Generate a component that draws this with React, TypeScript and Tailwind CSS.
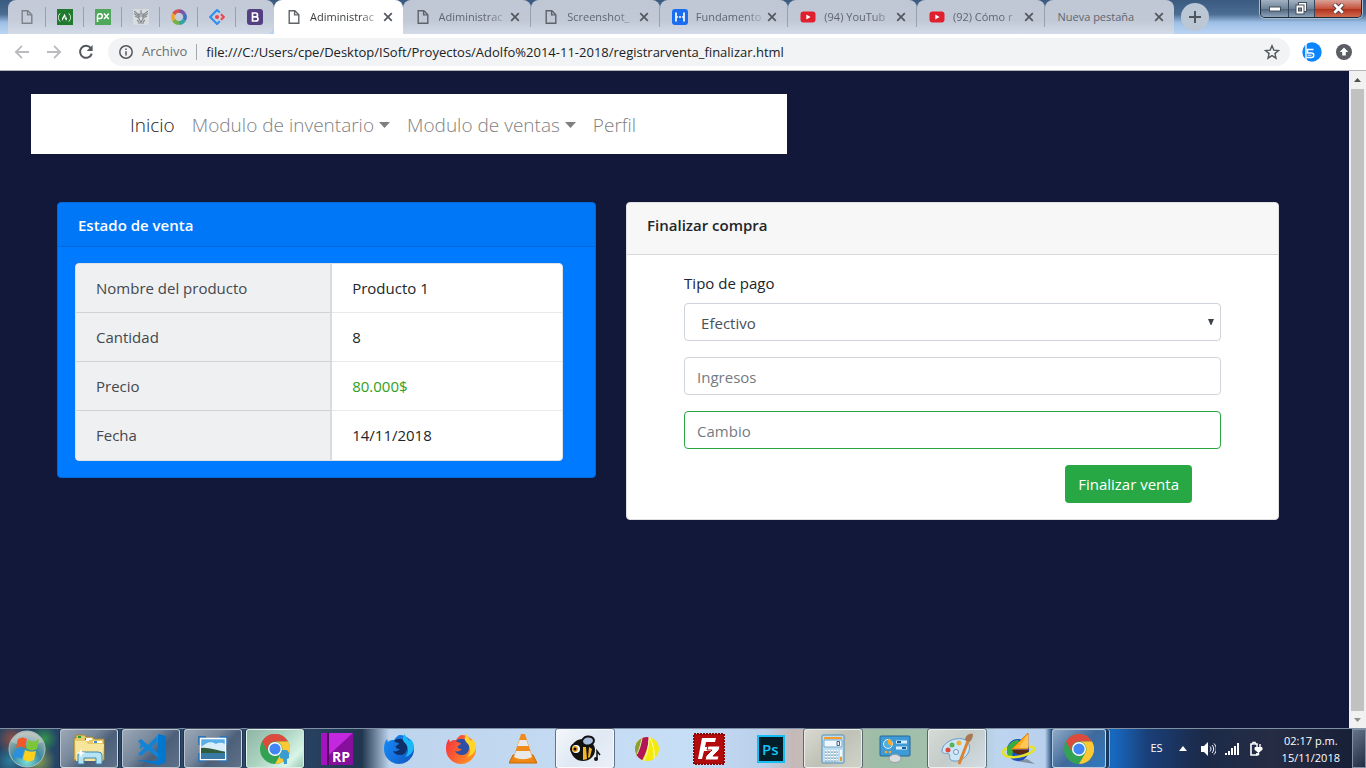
import type { ReactNode } from "react";
import { FaFreeCodeCamp } from "react-icons/fa";

const sans = "font-['Open_Sans','Noto_Sans',sans-serif]";

function PageIcon({ className = "" }: { className?: string }) {
  return (
    <svg className={className} width="16" height="16" viewBox="0 0 16 16" fill="none" stroke="#5f6368" strokeWidth="1.4">
      <path d="M3.2 1.7h5.6l4 4v8.6H3.2z" />
      <path d="M8.6 1.8v4.1h4.1" />
    </svg>
  );
}

function YoutubeIcon() {
  return (
    <svg width="16" height="16" viewBox="0 0 16 16">
      <rect x="0.5" y="2.5" width="15" height="11" rx="3" fill="#e0202c" />
      <path d="M6.3 5.4 10.6 8l-4.3 2.6z" fill="#fff" />
    </svg>
  );
}

function HIcon() {
  return (
    <svg width="16" height="16" viewBox="0 0 16 16">
      <rect width="16" height="16" rx="3" fill="#1a6df0" />
      <path d="M4 3.6v8.8M12 3.6v8.8" stroke="#fff" strokeWidth="1.7" />
      <path d="M4.5 8h1.6M9.9 8h1.6" stroke="#fff" strokeWidth="1.4" />
      <circle cx="8" cy="8" r="1" fill="#fff" />
    </svg>
  );
}

function CloseGlyph() {
  return (
    <svg width="10" height="10" viewBox="0 0 10 10" stroke="#54585e" strokeWidth="1.7">
      <path d="M1.2 1.2l7.6 7.6M8.8 1.2 1.2 8.8" />
    </svg>
  );
}

const pinned: { label: string; icon: ReactNode }[] = [
  { label: "Documento", icon: <PageIcon className="opacity-70" /> },
  {
    label: "freeCodeCamp",
    icon: (
      <span className="flex size-4 items-center justify-center bg-[#1f7a2d] text-white">
        <FaFreeCodeCamp size={13} />
      </span>
    ),
  },
  {
    label: "Pixabay",
    icon: (
      <svg width="16" height="16" viewBox="0 0 16 16">
        <rect width="16" height="16" fill="#4fa75b" />
        <g fill="none" stroke="#fff" strokeWidth="1.5">
          <path d="M2.5 13V7a2.4 2.4 0 1 1 2.4 2.6H2.8" />
          <path d="M9 4.6l4.8 5.4M13.8 4.6 9 10" />
        </g>
      </svg>
    ),
  },
  {
    label: "Escudo",
    icon: (
      <svg width="16" height="16" viewBox="0 0 16 16">
        <rect width="16" height="16" fill="#d9dcdf" />
        <g fill="none" stroke="#858a90" strokeWidth="1.1">
          <path d="M1 2l5 4M1 4.5l5 3M15 2l-5 4M15 4.5l-5 3M2 7l4 2M14 7l-4 2" />
          <path d="M6 5h4v5l-2 3-2-3zM8 1v4M5 14h6M4 11l2 2M12 11l-2 2M6.5 7h3" />
        </g>
      </svg>
    ),
  },
  {
    label: "Color",
    icon: (
      <svg width="16" height="16" viewBox="0 0 16 16" fill="none" strokeWidth="3.6">
        <path d="M8 2a6 6 0 0 1 5.2 3" stroke="#7a55a3" />
        <path d="M13.2 5a6 6 0 0 1 0 6" stroke="#3f6fc0" />
        <path d="M13.2 11A6 6 0 0 1 8 14" stroke="#31a5a4" />
        <path d="M8 14a6 6 0 0 1-5.2-3" stroke="#76b043" />
        <path d="M2.8 11a6 6 0 0 1 0-6" stroke="#eda52e" />
        <path d="M2.8 5A6 6 0 0 1 8 2" stroke="#d8504d" />
      </svg>
    ),
  },
  {
    label: "Ant Design",
    icon: (
      <svg width="16" height="16" viewBox="0 0 16 16" fill="none" strokeWidth="2">
        <path d="M10.8 3.6 8 1 1.2 8 8 15l2.8-2.7" stroke="#2a8ff0" />
        <path d="M12 5.2 14.8 8 12 10.8" stroke="#f0434e" />
        <circle cx="8" cy="8" r="2" fill="#f0434e" />
      </svg>
    ),
  },
  {
    label: "Bootstrap",
    icon: (
      <svg width="16" height="16" viewBox="0 0 16 16">
        <rect width="16" height="16" rx="3" fill="#553f83" />
        <path d="M5.5 4h3.1a1.9 1.9 0 0 1 0 3.8H5.5zM5.5 7.8h3.4a2.1 2.1 0 0 1 0 4.2H5.5z" fill="none" stroke="#fff" strokeWidth="1.7" />
      </svg>
    ),
  },
];

const tabs: { title: string; icon: ReactNode; active?: boolean }[] = [
  { title: "Adiministrac", icon: <PageIcon />, active: true },
  { title: "Adiministrac", icon: <PageIcon /> },
  { title: "Screenshot_", icon: <PageIcon /> },
  { title: "Fundamento", icon: <HIcon /> },
  { title: "(94) YouTub", icon: <YoutubeIcon /> },
  { title: "(92) Cómo r", icon: <YoutubeIcon /> },
  { title: "Nueva pestaña", icon: null },
];

function TabStrip() {
  return (
    <div className="flex h-[34px] bg-[linear-gradient(180deg,#3a5a80_0%,#4b6d92_42%,#9dbfe6_66%,#bcd5f3_100%)] pl-2">
      <div className="flex shrink-0 rounded-t-lg rounded-br-lg bg-[linear-gradient(180deg,#c3cad6,#c5ccda_60%,#d3dbe8)]">
        {pinned.map((p, i) => (
          <button key={p.label} aria-label={p.label} className="flex w-[38px] items-center justify-center">
            <span className="flex flex-1 justify-center">{p.icon}</span>
            {i < pinned.length - 1 && <span className="h-5 w-px bg-[#98a0ac]" />}
          </button>
        ))}
      </div>
      <div className="flex min-w-0 flex-[0_1_900px]">
        {tabs.map((t, i) => (
          <div
            key={i}
            className={`flex min-w-0 flex-1 items-center rounded-t-lg pl-3 ${
              t.active ? "bg-white" : "bg-[linear-gradient(180deg,#bfc7d4,#c1c9d6_60%,#d3dbe8)]"
            }`}
          >
            {t.icon && <span className="mr-2 shrink-0">{t.icon}</span>}
            <button
              className={`min-w-0 flex-1 text-left text-[11px] whitespace-nowrap ${
                t.icon ? "[mask-image:linear-gradient(90deg,#000_72%,#0003)]" : ""
              } ${t.active ? "text-[#3c4043]" : "text-[#5f6670]"}`}
            >
              {t.title}
            </button>
            <button aria-label="Cerrar pestaña" className="mr-[10px] ml-1 shrink-0">
              <CloseGlyph />
            </button>
            {i > 0 && i < tabs.length - 1 && <span className="h-5 w-px bg-[#98a0ac]" />}
          </div>
        ))}
      </div>
      <button aria-label="Nueva pestaña" className="mt-[3px] ml-[7px] flex size-7 shrink-0 items-center justify-center rounded-full bg-[#bcc7d5]">
        <svg width="14" height="14" viewBox="0 0 14 14" stroke="#50565e" strokeWidth="2">
          <path d="M7 1v12M1 7h12" />
        </svg>
      </button>
      <div className="mr-1 ml-auto flex h-[18px] shrink-0 overflow-hidden rounded-b-[5px] border border-t-0 border-[#1f2a38] shadow-[0_0_0_1px_#a9bdd2]">
        <button aria-label="Minimizar" className="flex w-7 items-center justify-center border-r border-[#34465a] bg-[linear-gradient(180deg,#a3b2c3,#6f8399_50%,#50657c_52%,#8ba3bb)]">
          <svg width="12" height="6" viewBox="0 0 12 6">
            <rect x="0.5" y="1" width="11" height="4" fill="#fff" stroke="#454f5c" />
          </svg>
        </button>
        <button aria-label="Restaurar" className="flex w-[26px] items-center justify-center border-r border-[#34465a] bg-[linear-gradient(180deg,#a3b2c3,#6f8399_50%,#50657c_52%,#8ba3bb)]">
          <svg width="13" height="13" viewBox="0 0 13 13" stroke="#454f5c" fill="#fff">
            <rect x="3.5" y="0.5" width="8" height="9" />
            <rect x="1" y="3" width="8" height="9" />
            <rect x="3.5" y="6" width="3" height="3" fill="#78899c" />
          </svg>
        </button>
        <button aria-label="Cerrar" className="flex w-[46px] items-center justify-center bg-[linear-gradient(180deg,#dba197,#c5543f_50%,#b1301a_52%,#d06a50)]">
          <svg width="13" height="11" viewBox="0 0 13 11">
            <path d="M2 1l9 9M11 1 2 10" stroke="#4d3c42" strokeWidth="4.6" />
            <path d="M2.3 1.3l8.4 8.4M10.7 1.3 2.3 9.7" stroke="#fff" strokeWidth="2.8" />
          </svg>
        </button>
      </div>
    </div>
  );
}

function Toolbar() {
  return (
    <div className="flex h-[37px] items-center border-b border-[#b5b5b8] bg-white px-[14px]">
      <div className="flex shrink-0 gap-4">
        <button aria-label="Atrás">
          <svg width="16" height="16" viewBox="0 0 16 16" fill="none" stroke="#b9bbbe" strokeWidth="1.8">
            <path d="M15 8H2M8 1.8 1.8 8 8 14.2" />
          </svg>
        </button>
        <button aria-label="Adelante">
          <svg width="16" height="16" viewBox="0 0 16 16" fill="none" stroke="#b9bbbe" strokeWidth="1.8">
            <path d="M1 8h13M8 1.8 14.2 8 8 14.2" />
          </svg>
        </button>
        <button aria-label="Recargar">
          <svg width="16" height="16" viewBox="0 0 16 16" fill="none" stroke="#54585d" strokeWidth="2">
            <path d="M12.8 4.1A6 6 0 1 0 13.8 9.6" />
            <path d="M14.6 1v6H8.6z" fill="#54585d" stroke="none" />
          </svg>
        </button>
      </div>
      <div className="ml-[14px] flex h-7 min-w-0 flex-1 items-center rounded-full bg-[#f1f3f4] pr-[10px] pl-[11px]">
        <svg width="14" height="14" viewBox="0 0 14 14" fill="none" stroke="#54585d" strokeWidth="1.5">
          <circle cx="7" cy="7" r="6.2" />
          <path d="M7 6.2v4.2M7 3.4v1.6" />
        </svg>
        <span className="ml-[9px] text-[13px] text-[#6a6e73]">Archivo</span>
        <span className="mx-[9px] h-4 w-px shrink-0 bg-[#a5a8ac]" />
        <input
          aria-label="Dirección"
          className="min-w-0 flex-1 bg-transparent pt-0.5 text-[13px] text-[#202124] outline-none"
          defaultValue="file:///C:/Users/cpe/Desktop/ISoft/Proyectos/Adolfo%2014-11-2018/registrarventa_finalizar.html"
        />
        <button aria-label="Marcador">
          <svg width="16" height="16" viewBox="0 0 16 16" fill="none" stroke="#54585d" strokeWidth="1.4">
            <path d="M8 1.8l1.8 4.3 4.7.4-3.6 3.1 1.1 4.6L8 11.7l-4 2.5 1.1-4.6L1.5 6.5l4.7-.4z" />
          </svg>
        </button>
      </div>
      <button aria-label="Extensión" className="ml-3">
        <svg width="20" height="20" viewBox="0 0 20 20">
          <circle cx="10" cy="10" r="9.7" fill="#0a84ff" />
          <path d="M4 0v20" stroke="#fff" strokeWidth="1.4" />
          <path d="M11.500 7.500H5.500V11H9.500a2.200 2.200 0 0 1 0 4.500H4.500" fill="none" stroke="#fff" strokeWidth="1.5" />
          <path d="M5.500 13.200H9.500" stroke="#fff" strokeWidth="1" />
        </svg>
      </button>
      <button aria-label="Actualizar Chrome" className="ml-[14px]">
        <svg width="16" height="16" viewBox="0 0 16 16">
          <circle cx="8" cy="8" r="8" fill="#5a5d62" />
          <path d="M8 3.5l4.3 4.6H9.8v3.5H6.2V8.1H3.7z" fill="#fff" />
        </svg>
      </button>
    </div>
  );
}

function Caret() {
  return (
    <svg className="mb-1 ml-[5px] inline" width="11" height="6" viewBox="0 0 11 6">
      <path d="M0 0h11L5.5 6z" fill="#7f7f7f" />
    </svg>
  );
}

const rows = [
  { name: "Nombre del producto", value: "Producto 1" },
  { name: "Cantidad", value: "8" },
  { name: "Precio", value: "80.000$", green: true },
  { name: "Fecha", value: "14/11/2018" },
];

function SaleCard() {
  return (
    <section className="rounded border border-[#0069d9] bg-[#007bff]">
      <h2 className="rounded-t-[3px] border-b border-[#0069d9] bg-[#0077f7] px-5 pt-[11px] pb-[9px] text-[15px] leading-[23px] font-semibold text-white">
        Estado de venta
      </h2>
      <div className="py-4 pr-8 pl-[17px]">
        <table className="w-full table-fixed border-separate border-spacing-0 overflow-hidden rounded border border-[#dfe1e3] bg-white text-[15px]">
          <tbody>
            {rows.map((r, i) => (
              <tr key={r.name}>
                <th
                  scope="row"
                  className={`h-[49px] w-[52.7%] border-r-2 border-[#d9dbdd] bg-[#eff0f2] pl-5 text-left font-normal text-[#43484d] ${
                    i < 3 ? "border-b border-b-[#d0d2d4]" : ""
                  }`}
                >
                  {r.name}
                </th>
                <td
                  className={`h-[49px] border-[#e9e9e9] pl-5 ${i < 3 ? "border-b" : ""} ${
                    r.green ? "text-[#31a020]" : "text-[#212529]"
                  }`}
                >
                  {r.value}
                </td>
              </tr>
            ))}
          </tbody>
        </table>
      </div>
    </section>
  );
}

const field =
  "block h-[38px] w-full rounded border bg-white px-3 pt-0.5 text-[15px] text-[#495057] placeholder:text-[#747b82] outline-none";

function CheckoutCard() {
  return (
    <section className="rounded border border-[#dfdfe1] bg-white">
      <h2 className="rounded-t-[3px] border-b border-[#d9d9db] bg-[#f7f7f7] px-5 pt-[11px] pb-[17px] text-[15px] leading-[23px] font-semibold text-[#212529]">
        Finalizar compra
      </h2>
      <form className="flex flex-col gap-4 px-[57px] py-4" onSubmit={(e) => e.preventDefault()}>
        <div>
          <label htmlFor="pago" className="mb-2 block text-[15px] leading-6 text-[#212529]">
            Tipo de pago
          </label>
          <div className="relative">
            <select id="pago" className={`${field} appearance-none border-[#ced4da] pl-4`}>
              <option>Efectivo</option>
            </select>
            <svg className="pointer-events-none absolute top-4 right-[7px]" width="6" height="6" viewBox="0 0 6 6">
              <path d="M0 0h6L3.4 6h-.8z" fill="#3c434a" />
            </svg>
          </div>
        </div>
        <input aria-label="Ingresos" placeholder="Ingresos" className={`${field} border-[#ced4da]`} />
        <input aria-label="Cambio" placeholder="Cambio" className={`${field} border-[#28a745]`} />
        <button className="mr-[29px] h-[38px] self-end rounded bg-[#28a745] px-[13px] text-[15px] text-white">
          Finalizar venta
        </button>
      </form>
    </section>
  );
}

function Chrome() {
  return (
    <svg width="30" height="30" viewBox="0 0 30 30">
      <circle cx="15" cy="15" r="15" fill="#34a255" />
      <path d="M2 7.5A15 15 0 0 1 28 7.5H15A7.5 7.5 0 0 0 8.5 18.7z" fill="#dd4b3e" />
      <path d="M28 7.5A15 15 0 0 1 15 30L21.5 18.7A7.5 7.5 0 0 0 15 7.5z" fill="#fcc934" />
      <circle cx="15" cy="15" r="7" fill="#fff" />
      <circle cx="15" cy="15" r="5.6" fill="#4285f4" />
    </svg>
  );
}

function Firefox({ id, from, to, tail, globe }: { id: string; from: string; to: string; tail: string; globe: string }) {
  return (
    <svg width="32" height="32" viewBox="0 0 32 32">
      <defs>
        <linearGradient id={id} x1="0" y1="0.3" x2="1" y2="0.8">
          <stop offset="0" stopColor={from} />
          <stop offset="1" stopColor={to} />
        </linearGradient>
      </defs>
      <path d="M1 16C1 11 2 8 4 6l1 3c2-2 4-2 6-2 2-3 4-5 6-5 6 0 14 6 14 14a15 15 0 0 1-30 0z" fill={`url(#${id})`} />
      <path d="M11 8c3-3 8-3 11 0 3 4 3 10-1 13-4 2-9 1-11-3 3 1 5 0 7-2-3 0-5-1-4-3l3-2c0-2-4-1-5-3z" fill={globe} />
      <path d="M22 1c-3 3-3 6 0 9 4 4 4 10 0 14 5-1 8-5 9-9 0-5-2-8-4-9l-1 2c-1-3-4-4-4-7z" fill={tail} />
    </svg>
  );
}

const dark = "bg-[linear-gradient(135deg,#9aa7b6_0%,#77879b_40%,#4d607a_60%,#5f7189_100%)]";

const apps: { name: string; icon: ReactNode; frame?: string }[] = [
  {
    name: "Explorador",
    frame: dark,
    icon: (
      <svg width="34" height="32" viewBox="0 0 34 32">
        <path d="M2 5h2V2h9l1 2h7l1 2h10v21H2z" fill="#e6c968" stroke="#9d8539" />
        <path d="M3 8h11l2 3h16l-1 17H4z" fill="#f7e59b" />
        <path d="M6 3h3v2H6z" fill="#2a9b34" />
        <path d="M13 5h4v2h-4z" fill="#c53b31" />
        <path d="M14 5h6v2h-3v1h-3z" fill="#fff" />
        <path d="M21 8h9v2h-9z" fill="#fff" />
        <path d="M22 8h3v2h-3z" fill="#3c8bd0" />
        <path d="M6 31V22q0-3 4-3h16q4 0 4 3v9h-6v-6H12v6z" fill="#b5e3f4" stroke="#3a87ad" />
        <path d="M9 15l1 4 4 1-4 1-1 4-1-4-4-1 4-1z" fill="#fff" />
      </svg>
    ),
  },
  {
    name: "Visual Studio Code",
    frame: dark,
    icon: (
      <svg width="32" height="32" viewBox="0 0 32 32">
        <path d="M23 1 31 3v26l-7 3L1 27l22 1z" fill="#0078cf" />
        <path d="M3 8l3-2 7 6 9-9 1 5-6 6 6 6v5l-10-8-7 6-3-2 6-6zM5 11v5l3-2z" fill="#1583d3" fillRule="evenodd" />
      </svg>
    ),
  },
  {
    name: "Visor de imágenes",
    frame: dark,
    icon: (
      <svg width="30" height="26" viewBox="0 0 30 26">
        <path d="M0 0h8v4H4v5H0zM22 0h8v9h-4V4h-4zM0 17h4v5h4v4H0zM26 17h4v9h-8v-4h4z" fill="#2e75b7" />
        <rect x="2.500" y="2.500" width="25" height="21" fill="#5aaee8" stroke="#fff" strokeWidth="1.5" />
        <path d="M3 11c6-5 10-6 15-3 4-2 6-1 9 0v7H3z" fill="#d8eef8" />
        <path d="M3 12c7-1 15 2 24 4v2H3z" fill="#315c3b" />
        <path d="M3 17h24v6H3z" fill="#377ba5" />
      </svg>
    ),
  },
  {
    name: "Google Chrome",
    frame: "bg-[linear-gradient(135deg,#8fb5a5,#acd3c0_45%,#d9f5e8_80%,#9cc8b4)]",
    icon: (
      <span className="relative">
        <Chrome />
        <svg className="absolute right-0 bottom-0" width="12" height="15" viewBox="0 0 12 15">
          <path d="M4 1h5l2 3v5l-2 1v5H6l-1-5-3-1V5z" fill="#3c9ccf" />
        </svg>
      </span>
    ),
  },
  {
    name: "Axure RP",
    icon: (
      <svg width="32" height="32" viewBox="0 0 32 32">
        <path d="M0 0h32v32H0z" fill="#a512c0" />
        <path d="M8 0h24L8 22z" fill="#c328de" />
        <path d="M32 0v32H8V22z" fill="#86109b" />
        <path d="M7 0v32" stroke="#520a60" strokeWidth="2" />
        <text x="11" y="29" fill="#fff" fontSize="14" fontWeight="700" fontFamily="Open Sans">RP</text>
      </svg>
    ),
  },
  { name: "Firefox Developer", icon: <Firefox id="fxdev" from="#1487f5" to="#1257c0" tail="#19b9f5" globe="#102f68" /> },
  { name: "Firefox", icon: <Firefox id="fx" from="#f5373f" to="#ff9a1e" tail="#ffd52b" globe="#2d4fa6" /> },
  {
    name: "VLC",
    icon: (
      <svg width="28" height="32" viewBox="0 0 28 32">
        <path d="M4 22h20l4 8H0z" fill="#ee850e" stroke="#c56806" />
        <path d="M12 1h4l8 25c-5 4-15 4-20 0z" fill="#f08a1a" />
        <path d="M10.500 7h7l2 6h-11zM7 18h14l2 6c-6 3-12 3-18 0z" fill="#e9e9e9" />
      </svg>
    ),
  },
  {
    name: "Abeja",
    frame: "bg-[linear-gradient(135deg,#f4f7fb,#dfe8f3_50%,#eaf0f8)]",
    icon: (
      <svg width="32" height="28" viewBox="0 0 32 28">
        <ellipse cx="14" cy="15" rx="12" ry="11" fill="#15130e" />
        <path d="M14 12h3l1 12-4 1zM20 12l3 2-2 8-2 1z" fill="#f3b52c" />
        <circle cx="7" cy="14" r="5" fill="#fff" stroke="#111" strokeWidth="2" />
        <circle cx="6" cy="14" r="3" fill="#e9a120" />
        <circle cx="6" cy="14" r="1.500" fill="#111" />
        <ellipse cx="19" cy="6" rx="6" ry="4.500" fill="#a9bddd" stroke="#111" strokeWidth="2" transform="rotate(-10 19 6)" />
        <path d="M28 24v-8l3 4" stroke="#111" strokeWidth="1.500" fill="none" />
        <circle cx="27" cy="24" r="2" fill="#111" />
      </svg>
    ),
  },
  {
    name: "Gravit",
    icon: (
      <svg width="26" height="26" viewBox="0 0 26 26">
        <defs>
          <clipPath id="disc"><circle cx="13" cy="13" r="12" /></clipPath>
        </defs>
        <g clipPath="url(#disc)">
          <path d="M0 0h26v26H0z" fill="#f4e90f" />
          <path d="M0 26V0h9C8 10 4 18 0 26z" fill="#8f9f30" />
          <path d="M1 22C6 14 8 7 8 0h7c0 10-4 20-8 26z" fill="#b31657" />
          <path d="M15 0c0 10-2 19-6 26M15 0c4 7 6 15 5 26" fill="none" stroke="#fffbc4" />
          <path d="M3 18C6 12 7 7 8 2" fill="none" stroke="#dfe2bb" />
        </g>
      </svg>
    ),
  },
  {
    name: "FileZilla",
    icon: (
      <svg width="32" height="32" viewBox="0 0 32 32">
        <rect x="1" y="1" width="30" height="30" fill="#b30b0b" stroke="#8c0707" strokeWidth="2" strokeDasharray="2 1" />
        <path d="M5 26 9 5h14l-1 4h-9l-1 5h7l-1 4h-7l-2 8z" fill="#fff" />
        <path d="M15 13h12l-1 4-6 6h6l-1 4H12l1-4 6-6h-5z" fill="#fff" stroke="#b30b0b" />
      </svg>
    ),
  },
  {
    name: "Photoshop",
    icon: (
      <svg width="28" height="28" viewBox="0 0 28 28">
        <rect x="1" y="1" width="26" height="26" fill="#031d29" stroke="#15bdf2" strokeWidth="2" />
        <text x="5" y="20" fill="#19c3f5" fontSize="15" fontWeight="600" fontFamily="Open Sans">Ps</text>
      </svg>
    ),
  },
  {
    name: "Calculadora",
    frame: "bg-[linear-gradient(135deg,#d9d9d2,#bfc1b6_50%,#ced3c8)]",
    icon: (
      <svg width="24" height="30" viewBox="0 0 24 30">
        <rect x="1" y="1" width="22" height="28" rx="1" fill="#bdddf1" stroke="#578db5" />
        <path d="M3 3h18v2H3z" fill="#f49d2c" />
        <path d="M3 6h18v7H3z" fill="#eef8ff" stroke="#7ba6c6" />
        <path d="M16 7.500h2.500v4H16z" fill="none" stroke="#466375" />
        <path d="M4 17h13M4 20h13M4 23h13M4 26h13" stroke="#fff" strokeWidth="2" strokeDasharray="2 1" />
        <path d="M4 18h13M4 21h13M4 24h13M4 27h13" stroke="#7795ad" strokeWidth="1" strokeDasharray="2 1" />
        <path d="M19 16h2v6h-2z" fill="#fff" />
        <path d="M19 23h2v4h-2z" fill="#ef9b29" />
      </svg>
    ),
  },
  {
    name: "Panel de control",
    icon: (
      <svg width="32" height="29" viewBox="0 0 32 29">
        <rect x="1" y="2" width="30" height="20" rx="1" fill="#3f9bd6" stroke="#246797" />
        <circle cx="9" cy="10" r="4.500" fill="#4fb0e4" stroke="#dff1fb" />
        <path d="M9 10V5a5 5 0 0 1 4 7z" fill="#f8a92b" />
        <path d="M17 8h11M17 14h11" stroke="#d8effb" strokeWidth="3" />
        <path d="M18 8h4M23 14h4" stroke="#155e97" strokeWidth="2" />
        <circle cx="7" cy="18" r="1.300" fill="#f8a92b" />
        <circle cx="11" cy="18" r="1.300" fill="#f8a92b" />
        <ellipse cx="16" cy="24.500" rx="6" ry="4" fill="#dadde0" stroke="#9ba0a5" />
      </svg>
    ),
  },
  {
    name: "Paint",
    frame: "bg-[linear-gradient(135deg,#d5dad4,#c3ccca_50%,#d3dde4)]",
    icon: (
      <svg width="34" height="32" viewBox="0 0 34 32">
        <path d="M2 18C2 10 14 4 23 6c7 2 7 8 6 12-3 9-14 12-18 9-3-2 0-5-2-6-3-1-7 0-7-3z" fill="#cce6f7" stroke="#6b9bc2" />
        <circle cx="8" cy="17" r="2.500" fill="#dd493e" />
        <circle cx="12" cy="12" r="2.500" fill="#58b354" />
        <circle cx="19" cy="10" r="2.500" fill="#f2b23a" />
        <circle cx="16" cy="19" r="2.500" fill="#e7edf0" stroke="#6b9bc2" />
        <path d="M19 31 28 8" stroke="#dc8333" strokeWidth="3" />
        <path d="M25 7c0-4 4-7 8-6 0 4-2 7-4 8z" fill="#aa7850" />
      </svg>
    ),
  },
  {
    name: "Navegador",
    icon: (
      <svg width="34" height="32" viewBox="0 0 34 32">
        <path d="M14 28l19 3-8-5z" fill="#777f8b" opacity=".8" />
        <circle cx="16" cy="17" r="11" fill="#1d4cc1" />
        <path d="M5 18c0-7 6-11 11-11l4 5-8 3-2 8-4 1z" fill="#37ae3d" />
        <path d="M10 17h17c-2 6-14 6-17 0z" fill="#5c2a10" />
        <path d="M5 15C-2 18 1 24 9 24c8 1 18-3 22-6 3-3 0-5-4-4" fill="none" stroke="#e6e22a" strokeWidth="2.500" />
        <path d="M10 16 26 0v16z" fill="#ffad1f" stroke="#df7c0d" />
        <path d="M17 15 26 1v14z" fill="#ffc758" />
      </svg>
    ),
  },
];

function Taskbar() {
  return (
    <footer className="flex h-10 shrink-0 items-center border-t border-[#7f90a5] bg-[linear-gradient(90deg,#234365_0%,#2c4a6c_20%,#20364f_26.5%,#bdd4ec_28.500%,#c7def7_50%,#b9cfea_56%,#c5b9b8_58%,#c3c0b7_61%,#9dbda7_64%,#a5c2ae_70%,#bdd5ef_73%,#b8d0ec_76.500%,#244d7c_77%,#164f91_79%,#1769c1_81.500%,#1a3f78_84%,#1b2a49_88%,#252c43_93%,#151e35_100%)]">
      <button
        aria-label="Inicio"
        className="flex h-full w-[60px] items-center bg-[radial-gradient(circle_at_12px_10px,#e0562a90,transparent_16px),radial-gradient(circle_at_44px_10px,#3fc43ca0,transparent_14px),radial-gradient(circle_at_38px_32px,#b8c94ab0,transparent_18px),radial-gradient(circle_at_10px_32px,#3aa6c290,transparent_16px)] pl-[7px]"
      >
        <svg width="40" height="38" viewBox="0 0 40 38">
          <defs>
            <radialGradient id="orb" cx="50%" cy="85%" r="85%">
              <stop offset="0" stopColor="#7fe0d8" />
              <stop offset=".45" stopColor="#3d8aa0" />
              <stop offset="1" stopColor="#b9b9ae" />
            </radialGradient>
          </defs>
          <circle cx="20" cy="19" r="18" fill="url(#orb)" stroke="#a8c1c6" />
          <path d="M4 12a18 18 0 0 1 32 0c-10 4-22 5-32 0z" fill="#fff" opacity=".25" />
          <path d="M11 9c3-2 6-2 9 0l-2 9c-3-2-6-2-9 0z" fill="#f0592a" />
          <path d="M21 10c4 2 7 2 11-1l-2 10c-4 2-7 2-11-1z" fill="#7cc63a" />
          <path d="M8 20c3-2 6-2 9 0l-2 9c-3-2-6-2-9 0z" fill="#2b8fe0" />
          <path d="M18 20c4 2 7 2 11 1l-2 9c-4 2-7 2-11-1z" fill="#fcd01f" />
        </svg>
      </button>
      <div className="flex h-full min-w-0 gap-1">
        {apps.map((a) => (
          <button
            key={a.name}
            aria-label={a.name}
            className={`flex w-[58px] min-w-0 items-center justify-center ${
              a.frame ? `rounded-[3px] border border-white/60 shadow-[0_0_0_1px_#18253890] ${a.frame}` : ""
            }`}
          >
            {a.icon}
          </button>
        ))}
        <button
          aria-label="Chrome"
          className="flex w-[54px] min-w-0 items-center justify-center rounded-[3px] border border-white/60 bg-[linear-gradient(135deg,#8fa9c6,#3f6a9b_50%,#2f7ac2)] shadow-[3px_0_0_#18385e,4px_0_0_#8fb4dc]"
        >
          <Chrome />
        </button>
      </div>
      <div className="ml-auto flex h-full items-center text-[11px] text-white">
        <span className="mr-4">ES</span>
        <button aria-label="Mostrar iconos ocultos" className="mr-[13px]">
          <svg width="8" height="5" viewBox="0 0 8 5"><path d="M4 0l4 5H0z" fill="#fff" /></svg>
        </button>
        <div className="mr-[19px] flex items-center gap-[9px]">
          <svg width="16" height="16" viewBox="0 0 16 16">
            <path d="M1 5h3l4-4v14l-4-4H1z" fill="#fff" />
            <path d="M10 5.500c1.300 1.500 1.300 3.500 0 5M12 4c2.200 2.500 2.200 5.500 0 8M14 2.500c3 3.500 3 7.500 0 11" fill="none" stroke="#fff" />
          </svg>
          <svg width="15" height="12" viewBox="0 0 15 12" fill="#fff">
            <path d="M0 10h2v2H0zM3 8h2v4H3zM6 5h2v7H6zM9 3h2v9H9zM12 0h2v12h-2z" />
          </svg>
          <svg width="14" height="16" viewBox="0 0 14 16" fill="none" stroke="#fff">
            <path d="M8 3.500V3H6V1.500H4V3H2v11h6v-2" strokeWidth="1.600" />
            <path d="M6 6.500h7v2l-2 2H8l-2-2z" fill="#fff" />
            <path d="M8 3v3M11 3v3M9.500 10v3.500H7" strokeWidth="1.400" />
          </svg>
        </div>
        <div className="mr-3 text-center leading-[17px]">
          <div>02:17 p.m.</div>
          <div>15/11/2018</div>
        </div>
        <button aria-label="Mostrar escritorio" className="h-full w-[14px] border border-[#8290a5] bg-[linear-gradient(135deg,#66738a,#222c43)]" />
      </div>
    </footer>
  );
}

export default function App() {
  return (
    <div className={`flex min-h-screen flex-col bg-[#12183a] ${sans}`}>
      <header>
        <TabStrip />
        <Toolbar />
      </header>
      <div className="flex flex-1">
        <main className="min-w-0 flex-1 pt-[23px]">
          <nav className="mr-[41.660%] ml-[31px] flex h-[60px] items-center gap-[17px] bg-white pt-0.5 pl-[99px] text-[19px] font-light whitespace-nowrap text-[#7f7f7f]">
            <a href="#inicio" className="text-[#1a1a1a]">Inicio</a>
            <a href="#inventario">Modulo de inventario<Caret /></a>
            <a href="#ventas">Modulo de ventas<Caret /></a>
            <a href="#perfil">Perfil</a>
          </nav>
          <div className="mt-12 mr-[55px] ml-[42px] grid grid-cols-[5fr_6fr] items-start">
            <div className="px-[15px]"><SaleCard /></div>
            <div className="px-[15px]"><CheckoutCard /></div>
          </div>
        </main>
        <div className="flex w-[17px] shrink-0 flex-col items-center bg-[#f1f1f1]">
          <button aria-label="Subir" className="flex h-[18px] items-center">
            <svg width="7" height="4" viewBox="0 0 7 4"><path d="M3.500 0 7 4H0z" fill="#505050" /></svg>
          </button>
          <div className="w-[13px] flex-1 bg-[#c1c1c1]" />
          <button aria-label="Bajar" className="flex h-[17px] items-center">
            <svg width="7" height="4" viewBox="0 0 7 4"><path d="M0 0h7L3.500 4z" fill="#909090" /></svg>
          </button>
        </div>
      </div>
      <Taskbar />
    </div>
  );
}
